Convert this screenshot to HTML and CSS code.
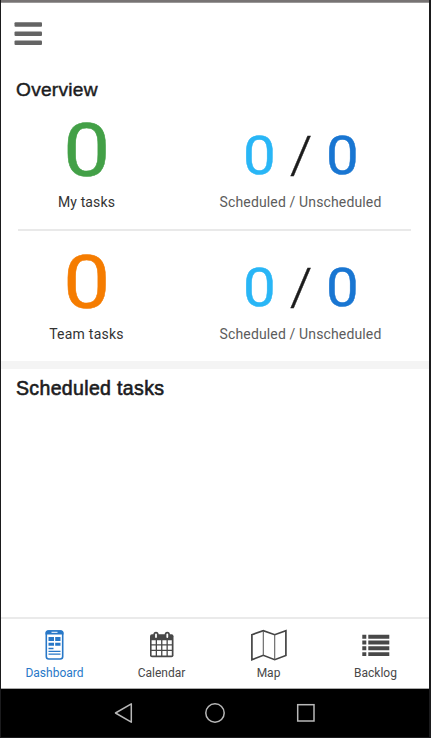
FILE: index.html
```html
<!DOCTYPE html>
<html lang="en">
<head>
<meta charset="utf-8">
<title>Dashboard</title>
<link rel="stylesheet" href="styles.css">
</head>
<body>
<div class="phone">
  <div class="status"></div>
  <header class="topbar">
    <svg class="menu" width="28" height="24" viewBox="0 0 28 24"><g fill="#646464"><rect x="0.5" y="0.3" width="27.5" height="4.5" rx="1"/><rect x="0.5" y="9.4" width="27.5" height="4.5" rx="1"/><rect x="0.5" y="18.5" width="27.5" height="4.5" rx="1"/></g></svg>
  </header>
  <main class="content">
    <h2 class="title overview">Overview</h2>
    <section class="row">
      <div class="total"><div class="figure"><span class="big green">0</span></div><div class="label mine">My tasks</div></div>
      <div class="split"><div class="figure pair"><span class="small light">0</span><span class="slash">/</span><span class="small blue">0</span></div><div class="label muted">Scheduled / Unscheduled</div></div>
    </section>
    <hr class="divider">
    <section class="row">
      <div class="total"><div class="figure"><span class="big orange">0</span></div><div class="label team">Team tasks</div></div>
      <div class="split"><div class="figure pair"><span class="small light">0</span><span class="slash">/</span><span class="small blue">0</span></div><div class="label muted">Scheduled / Unscheduled</div></div>
    </section>
    <div class="band"></div>
    <h2 class="title scheduled">Scheduled tasks</h2>
  </main>
  <nav class="tabs">
    <a class="tab active">
      <svg width="36" height="34" viewBox="0 0 36 34"><rect x="9.3" y="3" width="16.4" height="28" rx="2.5" fill="none" stroke="#2878c8" stroke-width="1.6"/><path d="M8.5 6.5V5Q8.5 2.3 11.500 2.300H23.500Q26.500 2.300 26.500 5V6.500Z" fill="#2878c8"/><path d="M14.500 4.300H20.500" stroke="#fff"/><path d="M11.500 9h5.500v4H11.500zM18.200 9H23.500v4h-5.300zM11.500 14.700h5.500v3H11.500zM18.200 14.700H23.500v3h-5.300z" fill="#2878c8"/><path d="M11.500 20.500h5M11.500 23.300h12M11.500 26.200h12" stroke="#2878c8" stroke-width="1.300"/></svg>
      <span>Dashboard</span>
    </a>
    <a class="tab">
      <svg width="36" height="34" viewBox="0 0 36 34"><rect x="6" y="6.200" width="23.500" height="23" rx="2" fill="#484848"/><path d="M7.600 12.200h4.100v4.100H7.600zM13 12.200h4.100v4.100H13zM18.400 12.200h4.100v4.100h-4.100zM23.800 12.200h4v4.100h-4zM7.600 17.600h4.100v4.100H7.600zM13 17.600h4.100v4.100H13zM18.400 17.600h4.100v4.100h-4.100zM23.800 17.600h4v4.100h-4zM7.600 23.100h4.100v4.300H7.600zM13 23.100h4.100v4.300H13zM18.400 23.100h4.100v4.300h-4.100zM23.800 23.100h4v4.300h-4z" fill="#fff"/><path d="M12 9.500V6.300M23.300 9.500V6.300" stroke="#484848" stroke-width="5.200" stroke-linecap="round"/><path d="M12 9V6.300M23.300 9V6.300" stroke="#fff" stroke-width="1.800" stroke-linecap="round"/></svg>
      <span>Calendar</span>
    </a>
    <a class="tab">
      <svg width="36" height="34" viewBox="0 0 36 34"><path d="M.9 6.700L12.300 2.700L23.700 6.700L34.900 2.700V27.500L23.700 31.700L12.300 27.300L.9 31.700Z" fill="none" stroke="#454545" stroke-width="1.700"/><path d="M12.300 2.900V27.300M23.700 6.700V31.500" stroke="#606060" stroke-width="1.100"/></svg>
      <span>Map</span>
    </a>
    <a class="tab">
      <svg width="36" height="34" viewBox="0 0 36 34"><path d="M4.300 8.700h4M10.300 8.700h21M4.300 14.500h4M10.300 14.500h21M4.300 20.300h4M10.300 20.300h21M4.300 26.100h4M10.300 26.100h21" stroke="#484848" stroke-width="3.900"/></svg>
      <span>Backlog</span>
    </a>
  </nav>
  <footer class="system">
    <svg width="428" height="48" viewBox="0 0 428 48"><g fill="none" stroke="#b8b8b8" stroke-width="1.500"><path d="M114.500 24L130.300 14.800V33.200Z" stroke-linejoin="round"/><circle cx="214" cy="24" r="9.200"/><rect x="296.700" y="15.700" width="16.300" height="16.300"/></g></svg>
  </footer>
</div>
</body>
</html>
```
FILE: styles.css
```css
* { box-sizing: border-box; }
body { margin: 0; background: #1b1b1d; font-family: Roboto, "Liberation Sans", sans-serif; }
.phone { width: 428px; height: 737px; margin-left: 1px; background: #fff; display: flex; flex-direction: column; overflow: hidden; }
.status { height: 3px; background: #777373; border-bottom: 1px solid #9a9898; flex: none; }
.topbar { height: 69px; padding: 19px 0 0 13px; flex: none; }
.menu, .tab svg, .system svg { display: block; }
.content { flex: 1; }
.title { margin: 0; padding-left: 15px; height: 36px; font: 400 19.2px/35px "Liberation Sans", sans-serif; letter-spacing: .22px; color: #1c1c1e; -webkit-text-stroke: .45px #1c1c1e; }
.scheduled { font-size: 19.5px; letter-spacing: .35px; -webkit-text-stroke-width: .6px; padding-top: 2px; }
.row { height: 121px; display: flex; }
.total { width: 171px; text-align: center; }
.split { width: 257px; text-align: center; }
.figure { height: 82px; display: flex; justify-content: center; align-items: flex-end; }
.figure span { display: block; }
.big { font-size: 74px; line-height: 78px; transform: scaleX(1.13); -webkit-text-stroke: .5px currentColor; }
.small { width: 31px; font-size: 53px; line-height: 67px; transform: scaleX(1.1); -webkit-text-stroke: .4px currentColor; }
.slash { width: 52px; font-size: 51px; line-height: 68px; font-weight: 300; color: #1c1c1c; transform: scaleX(1.12); -webkit-text-stroke: .3px currentColor; }
.green { color: #43a047; }
.orange { color: #f57c00; }
.light { color: #29b6f6; }
.blue { color: #1976d2; }
.label { height: 24px; line-height: 24px; font-size: 14px; letter-spacing: .14px; color: #333; white-space: nowrap; }
.team { letter-spacing: .25px; }
.muted { color: #5c5c5c; }
.divider { height: 2px; margin: 0 18px 0 17px; border: 0; background: #e9e9e9; }
.row + .divider + .row { height: 130px; padding-top: 9px; }
.band { height: 8px; background: #f4f4f4; }
.tabs { height: 72px; border-top: 2px solid #eaeaea; border-bottom: 1px solid #aaa; display: flex; flex: none; }
.tab { width: 107px; padding-top: 9px; display: flex; flex-direction: column; align-items: center; color: #484848; font-size: 12px; line-height: 22px; }
.active { color: #2878c8; }
.system { height: 48px; background: #000; flex: none; }
```
